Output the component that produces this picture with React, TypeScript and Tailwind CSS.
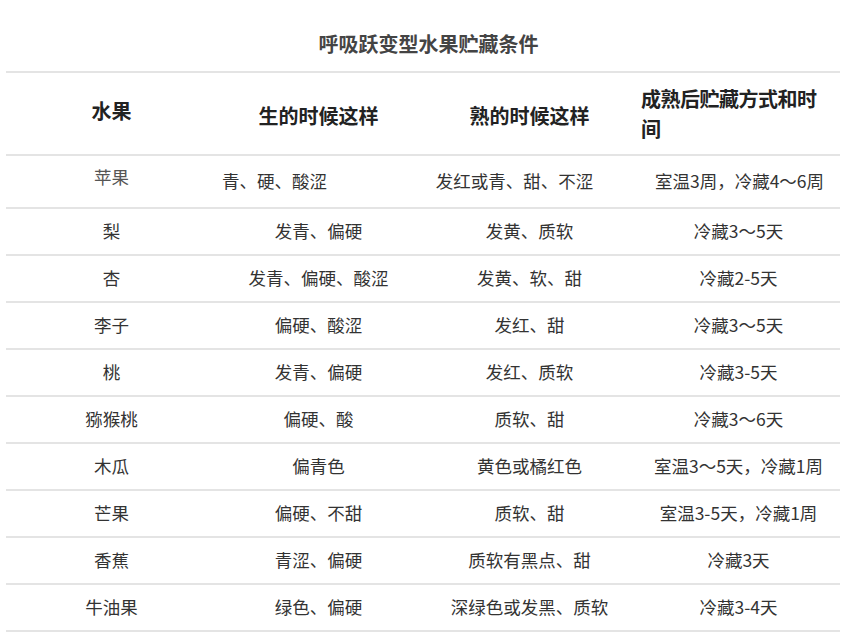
const rows: [string, string, string, string][] = [
  ["梨", "发青、偏硬", "发黄、质软", "冷藏3～5天"],
  ["杏", "发青、偏硬、酸涩", "发黄、软、甜", "冷藏2-5天"],
  ["李子", "偏硬、酸涩", "发红、甜", "冷藏3～5天"],
  ["桃", "发青、偏硬", "发红、质软", "冷藏3-5天"],
  ["猕猴桃", "偏硬、酸", "质软、甜", "冷藏3～6天"],
  ["木瓜", "偏青色", "黄色或橘红色", "室温3～5天，冷藏1周"],
  ["芒果", "偏硬、不甜", "质软、甜", "室温3-5天，冷藏1周"],
  ["香蕉", "青涩、偏硬", "质软有黑点、甜", "冷藏3天"],
  ["牛油果", "绿色、偏硬", "深绿色或发黑、质软", "冷藏3-4天"],
];

export default function App() {
  return (
    <div className="w-[857px] h-[643px] bg-white text-[#333] overflow-hidden" style={{ fontFamily: '"Noto Sans CJK SC", "Noto Sans", sans-serif' }}>
      <div className="h-[71px] flex items-center justify-center pt-[16px] text-[20px] font-bold text-[#444]">呼吸跃变型水果贮藏条件</div>
      <div className="mx-[6px] w-[834px] border-t-2 border-[#e4e4e4]">
        <div className="grid grid-cols-[211px_203px_219px_201px] h-[83px] border-b-2 border-[#e4e4e4] text-[20px] font-bold text-[#222]">
          <div className="flex items-center justify-center pb-[6px]">水果</div>
          <div className="flex items-center justify-center pt-[4px]">生的时候这样</div>
          <div className="flex items-center justify-center pt-[4px]">熟的时候这样</div>
          <div className="flex items-center pl-[2px] leading-[30px] tracking-[-0.5px]">成熟后贮藏方式和时<br />间</div>
        </div>
        <div className="grid grid-cols-[211px_203px_219px_201px] h-[53px] border-b-2 border-[#e4e4e4] text-[17.5px]">
          <div className="flex items-center justify-center pb-[8px] text-[#555]">苹果</div>
          <div className="flex items-center pl-[5px]">青、硬、酸涩</div>
          <div className="flex items-center justify-center pr-[30px]">发红或青、甜、不涩</div>
          <div className="flex items-center justify-center">室温3周，冷藏4～6周</div>
        </div>
        {rows.map((r) => (
          <div key={r[0]} className="grid grid-cols-[211px_203px_219px_201px] h-[47px] border-b-2 border-[#e4e4e4] text-[17.5px]">
            <div className="flex items-center justify-center">{r[0]}</div>
            <div className="flex items-center justify-center">{r[1]}</div>
            <div className="flex items-center justify-center">{r[2]}</div>
            <div className="flex items-center justify-center pr-[2px]">{r[3]}</div>
          </div>
        ))}
      </div>
    </div>
  );
}
